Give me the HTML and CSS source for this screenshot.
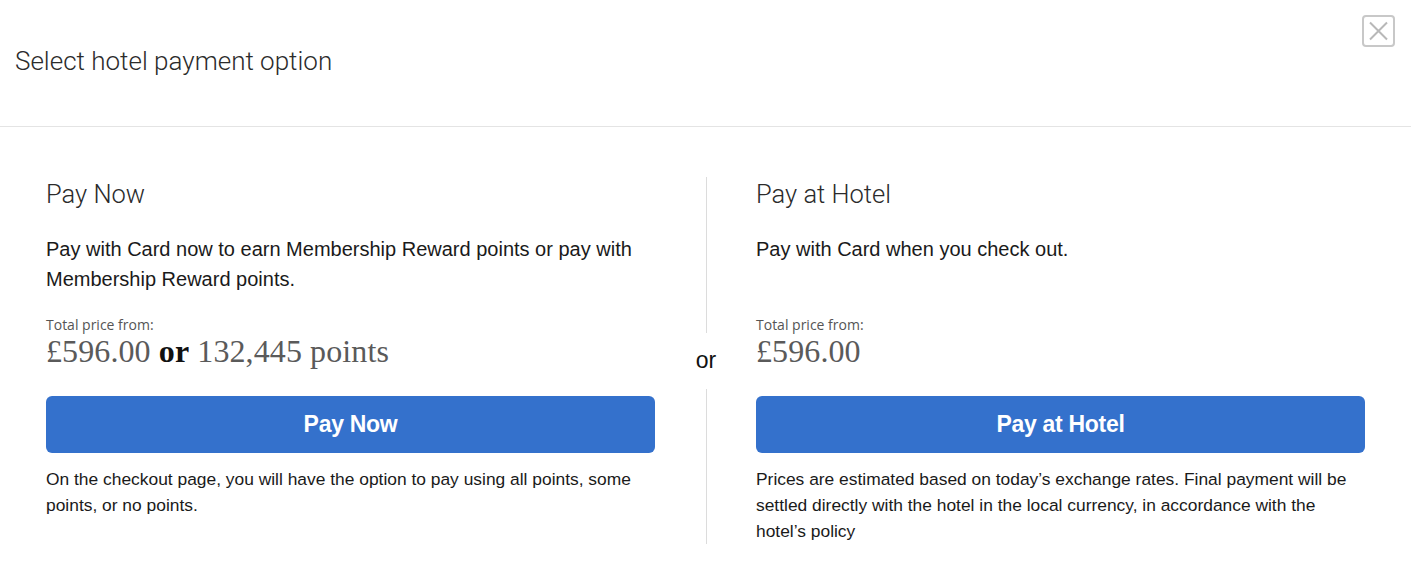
FILE: index.html
```html
<!DOCTYPE html>
<html lang="en">
<head>
<meta charset="utf-8">
<title>Select hotel payment option</title>
<link rel="stylesheet" href="styles.css">
</head>
<body>
<div class="modal">
  <header class="modal-header">
    <h1 class="modal-title">Select hotel payment option</h1>
    <button class="close-btn" aria-label="Close">
      <svg width="33" height="32" viewBox="0 0 33 32" aria-hidden="true">
        <rect x="1" y="1" width="31" height="30" rx="3" ry="3" fill="none" stroke="#c8c8c8" stroke-width="2"/>
        <path d="M8 7.5 L25 24.5 M25 7.5 L8 24.5" stroke="#b8b8b8" stroke-width="2" fill="none"/>
      </svg>
    </button>
  </header>
  <main class="modal-body">
    <section class="option">
      <h2 class="option-title">Pay Now</h2>
      <p class="option-desc">Pay with Card now to earn Membership Reward points or pay with Membership Reward points.</p>
      <div class="price-label">Total price from:</div>
      <div class="price">£596.00 <span class="or-word">or</span> 132,445 points</div>
      <button class="pay-btn">Pay Now</button>
      <p class="note">On the checkout page, you will have the option to pay using all points, some points, or no points.</p>
    </section>
    <div class="divider">
      <span class="divider-line"></span>
      <span class="divider-text">or</span>
      <span class="divider-line"></span>
    </div>
    <section class="option">
      <h2 class="option-title">Pay at Hotel</h2>
      <p class="option-desc">Pay with Card when you check out.</p>
      <div class="price-label">Total price from:</div>
      <div class="price">£596.00</div>
      <button class="pay-btn">Pay at Hotel</button>
      <p class="note note-narrow">Prices are estimated based on today’s exchange rates. Final payment will be settled directly with the hotel in the local currency, in accordance with the hotel’s policy</p>
    </section>
  </main>
</div>
</body>
</html>
```
FILE: styles.css
```css
* { box-sizing: border-box; }
html, body { margin: 0; padding: 0; background: #fff; }
body { font-family: "Liberation Sans", Arial, sans-serif; color: #1a1a1a; }

.modal { position: relative; width: 1411px; }

.modal-header {
  height: 127px;
  border-bottom: 1px solid #e4e4e4;
  padding: 47px 15px 0;
}
.modal-title {
  margin: 0;
  font-family: Roboto, "Liberation Sans", sans-serif;
  font-weight: 300;
  font-size: 26px;
  line-height: 28px;
  color: #2b2b2b;
}
.close-btn {
  position: absolute;
  top: 15px;
  right: 16px;
  width: 33px;
  height: 32px;
  padding: 0;
  border: 0;
  background: none;
  display: block;
}
.close-btn svg { display: block; }

.modal-body {
  display: flex;
  padding: 50px 45px 0 46px;
}
.option { width: 610px; flex: none; }

.option-title {
  margin: 0;
  padding-top: 1px;
  font-family: Roboto, "Liberation Sans", sans-serif;
  font-weight: 300;
  font-size: 25.5px;
  line-height: 32px;
  color: #2b2b2b;
}
.option-desc {
  margin: 24px 0 0;
  font-size: 20px;
  line-height: 30px;
  min-height: 60px;
  color: #1a1a1a;
}
.price-label {
  margin-top: 23px;
  font-family: "Open Sans", "Liberation Sans", sans-serif;
  font-size: 14px;
  line-height: 16px;
  color: #555;
}
.price {
  font-family: "Liberation Serif", "Times New Roman", serif;
  font-size: 32px;
  line-height: 36px;
  color: #5a5a5a;
  letter-spacing: 0.1px;
}
.or-word { font-weight: bold; color: #111; }

.pay-btn {
  display: block;
  width: 609px;
  height: 57px;
  margin-top: 27px;
  border: 0;
  border-radius: 6px;
  background: #3471cc;
  color: #fff;
  font-family: "Liberation Sans", Arial, sans-serif;
  font-weight: bold;
  font-size: 23px;
  letter-spacing: -0.3px;
}
.note {
  margin: 13px 0 0;
  font-size: 17.4px;
  line-height: 26px;
  color: #1a1a1a;
}
.note-narrow { padding-right: 15px; }

.divider {
  width: 100px;
  flex: none;
  display: flex;
  flex-direction: column;
  align-items: center;
  height: 367px;
}
.divider-line {
  flex: 1;
  width: 1px;
  background: #dcdcdc;
}
.divider-text {
  padding: 14px 0 16px;
  font-size: 23px;
  line-height: 26px;
  color: #111;
}
```
